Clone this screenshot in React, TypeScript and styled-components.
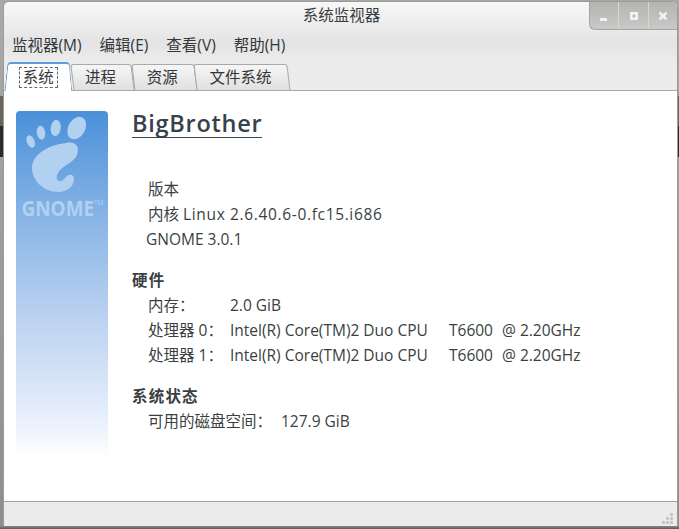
import React from "react";
import styled, { createGlobalStyle } from "styled-components";

const Global = createGlobalStyle`
  html, body { margin: 0; padding: 0; }
  body {
    width: 679px; height: 529px; overflow: hidden;
    background: #8b8a86;
    font-family: "Open Sans", "Noto Sans CJK SC", sans-serif;
    color: #2e3436;
  }
`;
const Desktop = styled.div`
  width: 679px; height: 529px; box-sizing: border-box;
  padding: 1px 1px 3px 3px;
  background:
    linear-gradient(180deg, transparent 126px, #2a2a28 126px, #2a2a28 157px, transparent 157px),
    linear-gradient(180deg, transparent 96px, #6b645c 96px, #6b645c 126px, transparent 126px),
    linear-gradient(180deg, #a8a8a4 0, #a8a8a4 20px, #8f8e8a 100%);
  position: relative;
  &::after {
    content: ""; position: absolute; left: 0; right: 0; bottom: 0; height: 3px;
    background: linear-gradient(180deg, #8a8a86, #5a5a58);
  }
`;
const Window = styled.div`
  height: 100%; display: flex; flex-direction: column; box-sizing: border-box;
  border: 1px solid #9a9a98; border-bottom: none;
  border-radius: 6px 6px 0 0; overflow: hidden;
  background: #ebebeb;
`;
const Chrome = styled.div`
  background: linear-gradient(180deg, #f8f8f8 0, #f0f0f0 16px, #e4e4e4 40px, #ebebeb 58px, #ececec 100%);
`;
const TitleBar = styled.div`
  height: 29px; position: relative; display: flex; justify-content: center; align-items: center;
  font-size: 15.5px; line-height: 20px; color: #3a3d3e; padding: 0 0 3px 2px; box-sizing: border-box;
`;
const Controls = styled.div`
  position: absolute; right: 0; top: 0; height: 27px; display: flex;
  background: linear-gradient(180deg, #b2b4b2, #c9cac8);
  border-bottom-left-radius: 6px; border: 1px solid #a5a6a4; border-width: 0 0 1px 1px;
`;
const Control = styled.div`
  width: 28.3px; display: flex; align-items: center; justify-content: center;
  border-left: 1px solid #d6d7d5;
  &:first-child { border-left: none; }
  svg { display: block; }
`;
const MenuBar = styled.div`
  height: 31px; display: flex; align-items: center; padding-left: 8px; gap: 18px; font-size: 15.5px;
  color: #33373a; box-sizing: border-box; padding-bottom: 4px;
`;
const MenuItem = styled.span``;
const Tabs = styled.div`
  height: 29px; display: flex; align-items: flex-end; padding-left: 2px; position: relative;
  margin-bottom: -1px; z-index: 1;
`;
const Tab = styled.div<{ $width: number }>`
  width: ${p => p.$width}px; height: 27px; box-sizing: border-box; position: relative; z-index: 0;
  display: flex; align-items: center; justify-content: center; font-size: 15.5px;
  color: #33373a; padding: 0 3px 2px 0;
  &::before {
    content: ""; position: absolute; inset: 0; z-index: -1; box-sizing: border-box;
    border: 1px solid #a9a9a7; border-radius: 3px 3px 0 0;
    background: linear-gradient(180deg, #f6f6f6, #e0e0e0);
    transform: skewX(7deg);
  }
`;
const ActiveTab = styled.div<{ $width: number }>`
  width: ${p => p.$width}px; height: 29px; box-sizing: border-box; position: relative; z-index: 2;
  display: flex; align-items: center; justify-content: center; font-size: 15.5px;
  color: #33373a; padding: 1px 1px 0 0;
  &::before, &::after {
    content: ""; position: absolute; top: 0; bottom: 0; width: 60%; z-index: -1; box-sizing: border-box;
    border-top: 2px solid #5c9bdc; background: #fff;
  }
  &::before {
    left: 0; border-left: 1px solid #5c9bdc; border-top-left-radius: 4px;
    transform: skewX(-6deg);
  }
  &::after {
    right: 0; border-right: 1px solid #7aa6d4; border-top-right-radius: 4px;
    transform: skewX(5deg);
  }
`;
const Focus = styled.span`
  border: 1px dashed #666; padding: 0 3px; line-height: 19px; display: block;
`;
const Page = styled.div`
  flex: 1; background: #fff; display: flex; border-top: 1px solid #a9a9a7;
  border-bottom: 1px solid #a0a0a0; padding: 20px 0 0 12px; min-height: 0; gap: 24px;
`;
const Logo = styled.div`
  width: 92px; height: 348px; flex: none; border-radius: 4px 4px 0 0; overflow: hidden;
  background: linear-gradient(180deg, #4a90d9 0, #84b2e5 100px, #b8d0f0 200px, #e4edfb 300px, #ffffff 348px);
  display: flex; justify-content: center;
`;
const Info = styled.div`
  flex: 1; display: flex; flex-direction: column; font-size: 15.5px; color: #3a3f42;
`;
const Host = styled.div`
  font-size: 23.5px; font-weight: 600; line-height: 26px; letter-spacing: 0.75px; color: #36424a;
  border-bottom: 1px solid #3a464e; align-self: flex-start; padding-bottom: 1px;
  margin-bottom: 39px; margin-top: -1px;
`;
const Indented = styled.div<{ $left?: number }>`
  padding-left: ${p => p.$left ?? 16}px; line-height: 25px; height: 25px; white-space: pre;
`;
const Stretch = styled.span`
  letter-spacing: 0.65px;
`;
const Heading = styled.div`
  font-weight: 700; line-height: 25px; height: 25px; letter-spacing: 1.2px; margin-top: 16px;
`;
const Row = styled.div`
  display: flex; padding-left: 16px; line-height: 25px; height: 25px; white-space: pre;
`;
const Label = styled.span`
  width: 82px; flex: none;
`;
const Model = styled.span`
  width: 219px; flex: none;
`;
const Stepping = styled.span`
  width: 53px; flex: none;
`;
const DiskLabel = styled.span`
  width: 133px; flex: none;
`;
const StatusBar = styled.div`
  height: 24px; flex: none; position: relative; background: #ebebeb;
`;
const Grip = styled.svg`
  position: absolute; right: 3px; bottom: 0;
`;

const GnomeFoot = () => (
  <svg width="92" height="120" viewBox="0 0 92 120" fill="#b2d0f0" style={{ display: "block" }}>
    <ellipse cx="14.7" cy="30.5" rx="3.8" ry="6.6" transform="rotate(-22 14.7 30.5)" />
    <ellipse cx="25" cy="21.7" rx="4.2" ry="7" transform="rotate(-8 25 21.7)" />
    <ellipse cx="39.7" cy="17" rx="5" ry="8.2" transform="rotate(8 39.7 17)" />
    <ellipse cx="60.7" cy="17" rx="8.5" ry="12" transform="rotate(28 60.7 17)" />
    <path d="M50 32 C60 30 64 36 61 44 C58 52 44 55 41 64 C39 71 46 72 49 67 C51 63 58 62 58 68 C58 76 50 81 43 81 C26 81 16 68 16 57 C16 43 33 34 50 32 Z" />
    <text transform="translate(5.5 105) scale(0.88 1)" fontFamily="'Open Sans', sans-serif" fontWeight="700" fontSize="21.5" fill="#b2d0f0">GNOME</text>
    <text x="78" y="94" fontFamily="'Open Sans', sans-serif" fontWeight="400" fontSize="6.5" fill="#b2d0f0">TM</text>
  </svg>
);

export default function App() {
  return (
    <Desktop>
      <Global />
      <Window>
        <Chrome>
          <TitleBar>
            系统监视器
            <Controls>
              <Control>
                <svg width="12" height="12" viewBox="0 0 12 12"><rect x="2" y="8" width="7" height="3" fill="#f2f3f2" /></svg>
              </Control>
              <Control>
                <svg width="12" height="12" viewBox="0 0 12 12"><path fillRule="evenodd" d="M2 2h8v8H2zM4.5 4.5v3h3v-3z" fill="#f2f3f2" /></svg>
              </Control>
              <Control>
                <svg width="12" height="12" viewBox="0 0 12 12"><path d="M2.6 2.6L9.4 9.4M9.4 2.6L2.6 9.4" stroke="#f2f3f2" strokeWidth="2.6" /></svg>
              </Control>
            </Controls>
          </TitleBar>
          <MenuBar>
            <MenuItem>监视器(M)</MenuItem>
            <MenuItem>编辑(E)</MenuItem>
            <MenuItem>查看(V)</MenuItem>
            <MenuItem>帮助(H)</MenuItem>
          </MenuBar>
          <Tabs>
            <ActiveTab $width={65.5}><Focus>系统</Focus></ActiveTab>
            <Tab $width={61}>进程</Tab>
            <Tab $width={62.5}>资源</Tab>
            <Tab $width={94}>文件系统</Tab>
          </Tabs>
        </Chrome>
        <Page>
          <Logo><GnomeFoot /></Logo>
          <Info>
            <Host>BigBrother</Host>
            <Indented>版本</Indented>
            <Indented>内核 <Stretch>Linux 2.6.40.6-0.fc15.i686</Stretch></Indented>
            <Indented $left={14}>GNOME 3.0.1</Indented>
            <Heading>硬件</Heading>
            <Row><Label>内存：</Label><span>2.0 GiB</span></Row>
            <Row><Label>处理器 0：</Label><Model>Intel(R) Core(TM)2 Duo CPU</Model><Stepping>T6600</Stepping><span>@ 2.20GHz</span></Row>
            <Row><Label>处理器 1：</Label><Model>Intel(R) Core(TM)2 Duo CPU</Model><Stepping>T6600</Stepping><span>@ 2.20GHz</span></Row>
            <Heading>系统状态</Heading>
            <Row><DiskLabel>可用的磁盘空间：</DiskLabel><span>127.9 GiB</span></Row>
          </Info>
        </Page>
        <StatusBar>
          <Grip width="14" height="14" viewBox="0 0 14 14" fill="#c3c6bf">
            <rect x="10" y="1" width="3" height="3" rx="1" />
            <rect x="6" y="5" width="3" height="3" rx="1" />
            <rect x="10" y="5" width="3" height="3" rx="1" />
            <rect x="2" y="9" width="3" height="3" rx="1" />
            <rect x="6" y="9" width="3" height="3" rx="1" />
            <rect x="10" y="9" width="3" height="3" rx="1" />
          </Grip>
        </StatusBar>
      </Window>
    </Desktop>
  );
}
